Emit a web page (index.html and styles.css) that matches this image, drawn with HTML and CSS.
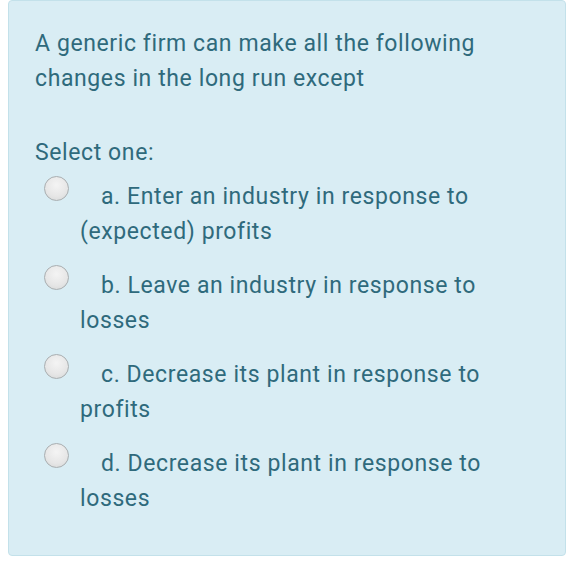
FILE: index.html
```html
<!DOCTYPE html>
<html>
<head>
<meta charset="utf-8">
<link rel="stylesheet" href="styles.css">
</head>
<body>
<div class="card">
  <p class="question">A generic firm can make all the following changes in the long run except</p>
  <p class="prompt">Select one:</p>
  <div class="answers">
    <div class="option"><span class="radio"></span>a. Enter an industry in response to (expected) profits</div>
    <div class="option"><span class="radio"></span>b. Leave an industry in response to losses</div>
    <div class="option"><span class="radio"></span>c. Decrease its plant in response to profits</div>
    <div class="option"><span class="radio"></span>d. Decrease its plant in response to losses</div>
  </div>
</div>
</body>
</html>
```

FILE: styles.css
```css
html, body {
  margin: 0;
  padding: 0;
  background: #ffffff;
}
body {
  font-family: Roboto, "Noto Sans", sans-serif;
  font-size: 23px;
  letter-spacing: 0.6px;
  line-height: 35px;
  color: #2f6a7c;
}
.card {
  margin: 0 10px 0 8px;
  height: 556px;
  box-sizing: border-box;
  background: #d9edf4;
  border: 1px solid #c3e1ea;
  border-radius: 4px;
  padding: 25px 30px 0 26px;
}
.question {
  margin: 0;
}
.prompt {
  margin: 39px 0 9px 0;
}
.answers {
  display: flex;
  flex-direction: column;
  gap: 19px;
  padding-left: 45px;
}
.radio {
  display: inline-block;
  width: 23px;
  height: 23px;
  border: 1px solid #a9aeb0;
  border-radius: 50%;
  background: radial-gradient(circle at 50% 35%, #f4f4f4 0%, #e6e6e6 60%, #d4d6d6 100%);
  box-sizing: content-box;
  margin: -5px 32px 0 -36px;
  vertical-align: 3px;
}
```
